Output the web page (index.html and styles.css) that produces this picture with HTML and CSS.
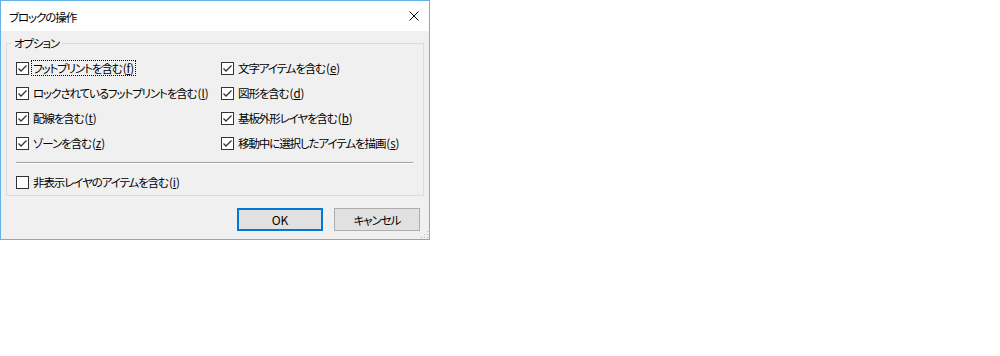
FILE: index.html
```html
<!DOCTYPE html>
<html lang="ja">
<head>
<meta charset="utf-8">
<title>ブロックの操作</title>
<link rel="stylesheet" href="styles.css">
</head>
<body>
	<div class="dialog">
		<div class="titlebar">
			<span class="title">ブロックの操作</span>
			<span class="close">
				<svg width="10" height="10" viewBox="0 0 10 10"><path d="M0.5 0.5 L9.5 9.5 M9.5 0.5 L0.5 9.5" stroke="#000" stroke-width="1"/></svg>
			</span>
		</div>
		<div class="content">
			<fieldset class="group">
				<legend>オプション</legend>
				<div class="grid">
					<label class="chk"><span class="box on"></span><span class="txt focus">フットプリントを含む<span class="key">(<u>f</u>)</span></span></label>
					<label class="chk"><span class="box on"></span><span class="txt">文字アイテムを含む<span class="key">(<u>e</u>)</span></span></label>
					<label class="chk"><span class="box on"></span><span class="txt">ロックされているフットプリントを含む<span class="key">(<u>l</u>)</span></span></label>
					<label class="chk"><span class="box on"></span><span class="txt">図形を含む<span class="key">(<u>d</u>)</span></span></label>
					<label class="chk"><span class="box on"></span><span class="txt">配線を含む<span class="key">(<u>t</u>)</span></span></label>
					<label class="chk"><span class="box on"></span><span class="txt">基板外形レイヤを含む<span class="key">(<u>b</u>)</span></span></label>
					<label class="chk"><span class="box on"></span><span class="txt">ゾーンを含む<span class="key">(<u>z</u>)</span></span></label>
					<label class="chk"><span class="box on"></span><span class="txt">移動中に選択したアイテムを描画<span class="key">(<u>s</u>)</span></span></label>
				</div>
				<div class="sep"></div>
				<label class="chk"><span class="box"></span><span class="txt">非表示レイヤのアイテムを含む<span class="key">(<u>i</u>)</span></span></label>
			</fieldset>
			<div class="buttons">
				<button class="btn default">OK</button>
				<button class="btn jp">キャンセル</button>
			</div>
			<div class="grip"></div>
		</div>
	</div>
</body>
</html>
```

FILE: styles.css
```css
*{
	margin: 0;
	padding: 0;
	box-sizing: border-box;
}
body{
	background: #fff;
	font-family: "Noto Sans CJK JP", "Liberation Sans", sans-serif;
	font-size: 11.5px;
	font-feature-settings: "palt";
	letter-spacing: -1.1px;
	color: #000;
}

.dialog{
	width: 430px;
	height: 240px;
	border: 1px solid #64b0e8;
	background: #f0f0f0;
	display: flex;
	flex-direction: column;
}
.titlebar{
	height: 30px;
	background: #fff;
	display: flex;
	align-items: center;
	justify-content: space-between;
	padding: 0 10px 0 8px;
}
.title{
	font-size: 11.5px;
	line-height: 16px;
	margin-top: 1px;
}
.close{
	display: flex;
	width: 10px;
	height: 10px;
}

.content{
	flex: 1;
	padding: 4px 5px 0 5px;
	position: relative;
}
.group{
	border: 1px solid #dcdcdc;
	padding: 4px 0 4px 9px;
	height: 161px;
}
.group legend{
	margin-left: -5px;
	padding: 0 3px;
	line-height: 16px;
}
.grid{
	display: grid;
	grid-template-columns: 205px 1fr;
	row-gap: 9px;
	margin-top: 5px;
}
.chk{
	display: flex;
	align-items: center;
	height: 16px;
	white-space: nowrap;
}
.box{
	width: 13px;
	height: 13px;
	border: 1px solid #333;
	background: #fff;
	margin-right: 2px;
	flex: none;
}
.box.on{
	background: #fff url("data:image/svg+xml;utf8,<svg xmlns='http://www.w3.org/2000/svg' width='11' height='11'><path d='M1.5 5.5 L4 8 L9.5 2.5' fill='none' stroke='%23333' stroke-width='1.3'/></svg>") no-repeat center;
}
.txt{
	padding: 0 1px;
	line-height: 14px;
	border: 1px solid transparent;
}
.txt.focus{
	border: 1px dotted #000;
}
.key{
	letter-spacing: 0;
	margin-left: 1px;
}
.key u{
	text-underline-offset: 1px;
}
.sep{
	height: 2px;
	border-top: 1px solid #a0a0a0;
	border-bottom: 1px solid #fff;
	margin: 11px 10px 10px 0;
}

.buttons{
	display: flex;
	justify-content: flex-end;
	gap: 11px;
	margin: 12px 4px 0 0;
}
.btn{
	width: 86px;
	height: 23px;
	background: #e1e1e1;
	border: 1px solid #adadad;
	font: inherit;
	font-size: 12px;
	letter-spacing: 0;
	color: #000;
}
.btn.jp{
	font-size: 11.5px;
	letter-spacing: -1.1px;
}
.btn.default{
	border: 2px solid #0078d7;
}
.grip{
	position: absolute;
	right: 1px;
	bottom: 1px;
	width: 8px;
	height: 8px;
	background:
		radial-gradient(circle, #b4b4b4 1px, transparent 1px) 0 0 / 3px 3px;
	clip-path: polygon(100% 0, 100% 100%, 0 100%);
}
```
